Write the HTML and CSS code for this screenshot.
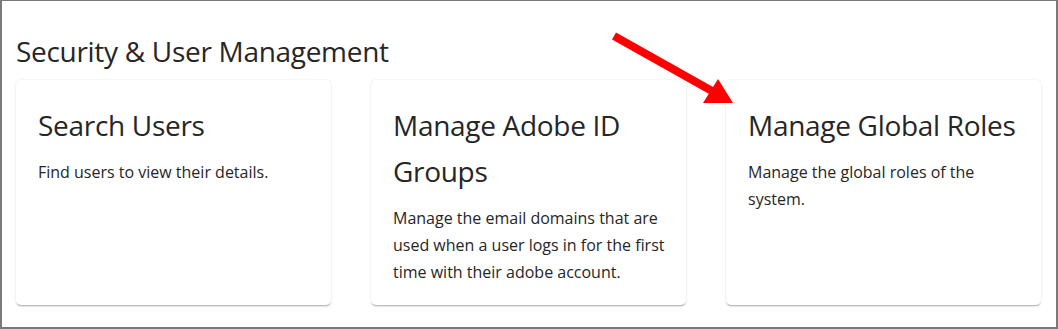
FILE: index.html
```html
<!DOCTYPE html>
<html lang="en">
<head>
<meta charset="utf-8">
<title>Security &amp; User Management</title>
<link rel="stylesheet" href="styles.css">
</head>
<body>
<div class="frame">
  <h1 class="section-title">Security &amp; User Management</h1>
  <div class="cards">
    <div class="card">
      <h2 class="card-title">Search Users</h2>
      <p class="card-desc">Find users to view their details.</p>
    </div>
    <div class="card">
      <h2 class="card-title">Manage Adobe ID Groups</h2>
      <p class="card-desc">Manage the email domains that are used when a user logs in for the first time with their adobe account.</p>
    </div>
    <div class="card">
      <h2 class="card-title">Manage Global Roles</h2>
      <p class="card-desc">Manage the global roles of the system.</p>
    </div>
  </div>
  <svg class="arrow" width="140" height="90" viewBox="0 0 140 90" aria-hidden="true">
    <line x1="16" y1="17" x2="114" y2="72" stroke="#ff0000" stroke-width="8"/>
    <polygon points="135,84 120,60 105,84" fill="#ff0000"/>
  </svg>
</div>
</body>
</html>
```
FILE: styles.css
```css
* { box-sizing: border-box; }
html, body { margin: 0; padding: 0; background: #fff; }
body { font-family: "Open Sans", "Liberation Sans", sans-serif; color: #262626; }

.frame {
  position: relative;
  width: 1058px;
  height: 329px;
  border: 2px solid #7a7a7a;
  border-top-width: 1px;
  padding: 33px 15px 0 14px;
  overflow: hidden;
}

.section-title {
  margin: 0 0 12px;
  font-size: 28px;
  line-height: 34px;
  font-weight: 400;
  letter-spacing: -0.3px;
}

.cards {
  display: grid;
  grid-template-columns: repeat(3, 315px);
  column-gap: 40px;
  align-items: stretch;
}

.card {
  background: #fff;
  border-radius: 5px;
  padding: 22px 14px 19px 22px;
  box-shadow: 0 2px 2px -1px rgba(0,0,0,0.32), 0 0 3px rgba(0,0,0,0.09);
}

.card-title {
  margin: 0;
  font-size: 28px;
  line-height: 46px;
  font-weight: 400;
  letter-spacing: -0.3px;
}

.card-desc {
  margin: 11px 0 0;
  font-size: 16px;
  line-height: 27px;
}

.arrow {
  position: absolute;
  left: 596px;
  top: 18px;
}
```
